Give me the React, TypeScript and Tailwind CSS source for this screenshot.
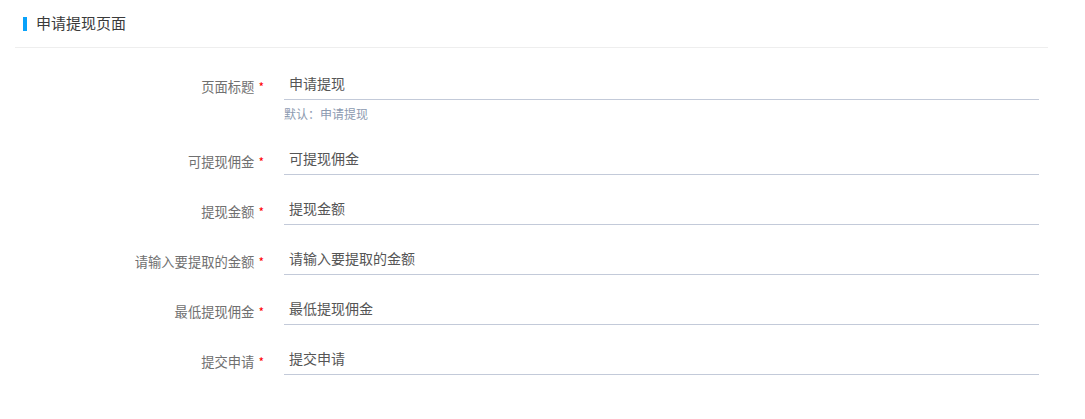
const fields = [
  { label: '页面标题', value: '申请提现', hint: '默认：申请提现' },
  { label: '可提现佣金', value: '可提现佣金' },
  { label: '提现金额', value: '提现金额' },
  { label: '请输入要提取的金额', value: '请输入要提取的金额' },
  { label: '最低提现佣金', value: '最低提现佣金' },
  { label: '提交申请', value: '提交申请' },
];

export default function App() {
  return (
    <div
      className="min-h-[419px] bg-white pl-[15px] pr-[37px]"
      style={{ fontFamily: '"Noto Sans CJK SC", "Noto Sans", sans-serif' }}
    >
      {/* Header */}
      <div className="flex h-[48px] items-center border-b border-[#eeeeee] pl-[8px]">
        <span className="h-[14px] w-[4px] bg-[#09a2fa]" />
        <span className="ml-[9px] text-[15px] text-[#3a3a3a]">申请提现页面</span>
      </div>

      {/* Form */}
      <div className="pt-[20px]">
        {fields.map((f) => (
          <div key={f.label} className="mb-[18px] flex">
            <div className="flex w-[269px] shrink-0 justify-end pr-[20px] pt-[9px]">
              <span className="text-[13.3px] leading-[20px] text-[#707070]">{f.label}</span>
              <span className="ml-[4px] text-[12px] leading-[20px] text-[#ff0000]">*</span>
            </div>
            <div className="mr-[9px] flex-1">
              <input
                readOnly
                value={f.value}
                className="h-[32px] w-full border-b border-[#c3cad9] px-[5px] pb-[2px] text-[14px] text-[#555] outline-none"
              />
              {f.hint && (
                <div className="h-[25px] pt-[5px] text-[12px] leading-[17px] text-[#8c9ab0]">
                  {f.hint}
                </div>
              )}
            </div>
          </div>
        ))}
      </div>
    </div>
  );
}
